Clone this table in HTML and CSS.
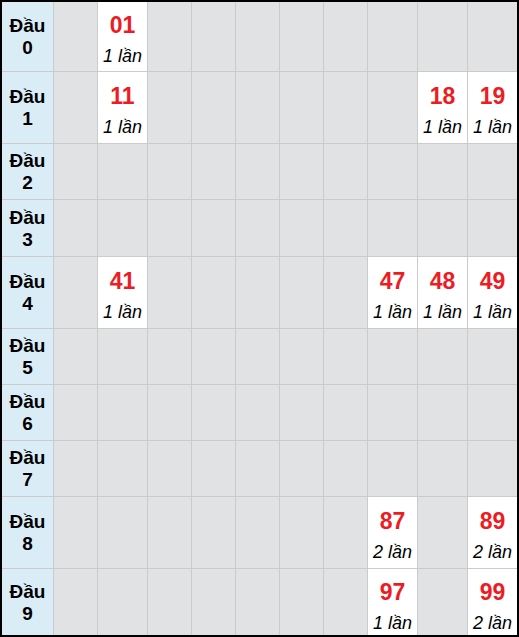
FILE: index.html
```html
<!DOCTYPE html>
<html lang="vi">
<head>
<meta charset="utf-8">
<title>Thống kê đầu</title>
<link rel="stylesheet" href="styles.css">
</head>
<body>
<div class="board">
  <div class="head">Đầu<br>0</div>
  <div class="cell"></div><div class="cell hit"><span class="num">01</span><span class="cnt">1 lần</span></div><div class="cell"></div><div class="cell"></div><div class="cell"></div><div class="cell"></div><div class="cell"></div><div class="cell"></div><div class="cell"></div><div class="cell"></div>

  <div class="head">Đầu<br>1</div>
  <div class="cell"></div><div class="cell hit"><span class="num">11</span><span class="cnt">1 lần</span></div><div class="cell"></div><div class="cell"></div><div class="cell"></div><div class="cell"></div><div class="cell"></div><div class="cell"></div><div class="cell hit"><span class="num">18</span><span class="cnt">1 lần</span></div><div class="cell hit"><span class="num">19</span><span class="cnt">1 lần</span></div>

  <div class="head">Đầu<br>2</div>
  <div class="cell"></div><div class="cell"></div><div class="cell"></div><div class="cell"></div><div class="cell"></div><div class="cell"></div><div class="cell"></div><div class="cell"></div><div class="cell"></div><div class="cell"></div>

  <div class="head">Đầu<br>3</div>
  <div class="cell"></div><div class="cell"></div><div class="cell"></div><div class="cell"></div><div class="cell"></div><div class="cell"></div><div class="cell"></div><div class="cell"></div><div class="cell"></div><div class="cell"></div>

  <div class="head">Đầu<br>4</div>
  <div class="cell"></div><div class="cell hit"><span class="num">41</span><span class="cnt">1 lần</span></div><div class="cell"></div><div class="cell"></div><div class="cell"></div><div class="cell"></div><div class="cell"></div><div class="cell hit"><span class="num">47</span><span class="cnt">1 lần</span></div><div class="cell hit"><span class="num">48</span><span class="cnt">1 lần</span></div><div class="cell hit"><span class="num">49</span><span class="cnt">1 lần</span></div>

  <div class="head">Đầu<br>5</div>
  <div class="cell"></div><div class="cell"></div><div class="cell"></div><div class="cell"></div><div class="cell"></div><div class="cell"></div><div class="cell"></div><div class="cell"></div><div class="cell"></div><div class="cell"></div>

  <div class="head">Đầu<br>6</div>
  <div class="cell"></div><div class="cell"></div><div class="cell"></div><div class="cell"></div><div class="cell"></div><div class="cell"></div><div class="cell"></div><div class="cell"></div><div class="cell"></div><div class="cell"></div>

  <div class="head">Đầu<br>7</div>
  <div class="cell"></div><div class="cell"></div><div class="cell"></div><div class="cell"></div><div class="cell"></div><div class="cell"></div><div class="cell"></div><div class="cell"></div><div class="cell"></div><div class="cell"></div>

  <div class="head">Đầu<br>8</div>
  <div class="cell"></div><div class="cell"></div><div class="cell"></div><div class="cell"></div><div class="cell"></div><div class="cell"></div><div class="cell"></div><div class="cell hit"><span class="num">87</span><span class="cnt">2 lần</span></div><div class="cell"></div><div class="cell hit"><span class="num">89</span><span class="cnt">2 lần</span></div>

  <div class="head">Đầu<br>9</div>
  <div class="cell"></div><div class="cell"></div><div class="cell"></div><div class="cell"></div><div class="cell"></div><div class="cell"></div><div class="cell"></div><div class="cell hit low"><span class="num">97</span><span class="cnt">1 lần</span></div><div class="cell"></div><div class="cell hit low"><span class="num">99</span><span class="cnt">2 lần</span></div>
</div>
</body>
</html>
```
FILE: styles.css
```css
html, body {
  margin: 0;
  padding: 0;
  background: #ffffff;
}

body {
  font-family: "Liberation Sans", Arial, sans-serif;
  color: #000;
}

.board {
  width: 515px;
  height: 633px;
  border: 2px solid #000;
  background: #cbcbcb;
  display: grid;
  grid-template-columns: 51px 43px 49px 43px 43px 43px 43px 43px 49px 49px 49px;
  grid-template-rows: 69px 71px 55px 56px 71px 55px 55px 55px 71px 66px;
  gap: 1px;
}

.head {
  background: #daedf7;
  font-weight: bold;
  font-size: 19px;
  line-height: 22px;
  text-align: center;
  display: flex;
  align-items: center;
  justify-content: center;
  padding-top: 1px;
}

.cell {
  background: #e1e2e4;
}

.cell.hit {
  background: #fff;
  display: flex;
  flex-direction: column;
  align-items: center;
  justify-content: center;
  white-space: nowrap;
  padding-top: 4px;
  overflow: hidden;
}

.cell.hit.low {
  justify-content: flex-start;
  padding-top: 6px;
}

.num {
  color: #ed1c24;
  font-weight: bold;
  font-size: 23px;
  line-height: 34px;
}

.cnt {
  font-style: italic;
  font-size: 18px;
  line-height: 28px;
}
```
